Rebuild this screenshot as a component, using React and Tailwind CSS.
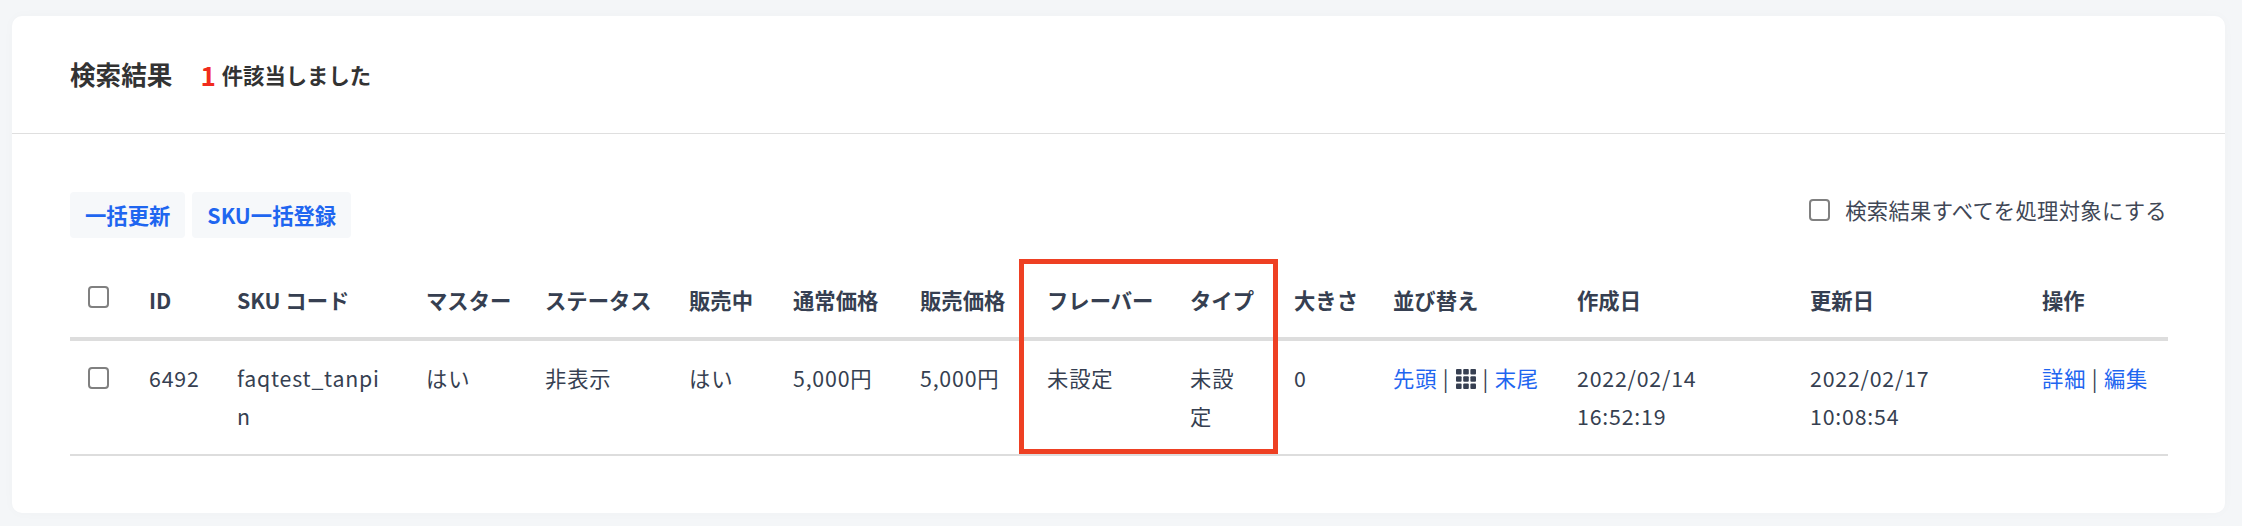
import React from "react";

function Box({ className = "" }) {
  return (
    <input
      type="checkbox"
      className={"block appearance-none w-[21px] h-[22px] border-2 border-[#808080] rounded-[4px] bg-white " + className}
    />
  );
}

function GridIcon() {
  const cells = [];
  for (let r = 0; r < 3; r++) {
    for (let c = 0; c < 3; c++) {
      cells.push(<rect key={r + "-" + c} x={c * 7.2} y={r * 7.2} width="5.6" height="5.6" rx="1" fill="#363f51" />);
    }
  }
  return (
    <svg viewBox="0 0 20 20" className="inline-block w-5 h-5 align-[-2px] mx-[1px]">
      {cells}
    </svg>
  );
}

const heads = [
  ["ID", "w-[88px]"],
  ["SKU コード", "w-[189px]"],
  ["マスター", "w-[119px]"],
  ["ステータス", "w-[144px]"],
  ["販売中", "w-[104px]"],
  ["通常価格", "w-[127px]"],
  ["販売価格", "w-[127px]"],
  ["フレーバー", "w-[143px]"],
  ["タイプ", "w-[104px]"],
  ["大きさ", "w-[99px]"],
  ["並び替え", "w-[184px]"],
  ["作成日", "w-[233px]"],
  ["更新日", "w-[232px]"],
  ["操作", "w-[147px]"],
];

const tdc = "align-top px-[21px] pt-[18px] border-b-2 border-[#dddddd] break-all tracking-[0.8px]";
const tdn = "align-top px-[21px] pt-[18px] border-b-2 border-[#dddddd] whitespace-nowrap tracking-[0.8px]";

export default function App() {
  return (
    <div
      className="min-h-screen bg-[#f4f6f8] pt-4 pb-[13px] pl-3 pr-[17px] text-[#363f51] text-[21.33px]"
      style={{ fontFamily: '"Noto Sans CJK JP", "Noto Sans", sans-serif' }}
    >
      <div className="bg-white rounded-[10px] h-[497px] shadow-[0_0_12px_rgba(0,0,0,0.025)]">
        <div className="h-[118px] border-b border-[#dfdfdf] pl-[58px] flex items-center text-[#333333]">
          <span className="text-[25.6px] font-bold">検索結果</span>
          <span className="ml-[28px] text-[26px] font-bold text-[#f12b1d] leading-none">1</span>
          <span className="ml-[6px] font-bold">件該当しました</span>
        </div>

        <div className="px-[58px] pt-[58px]">
          <div className="flex justify-between h-[71px]">
            <div className="flex gap-[7px] h-[46px]">
              <button className="px-[15px] bg-[#f6f8fa] rounded-[4px] text-[#1f66f0] font-bold">一括更新</button>
              <button className="px-[15px] bg-[#f6f8fa] rounded-[4px] text-[#1f66f0] font-bold">SKU一括登録</button>
            </div>
            <label className="flex items-start h-[30px] text-[#3f4756] tracking-[0.3px]">
              <Box className="mt-[7px]" />
              <span className="ml-[15px] leading-[36px]">検索結果すべてを処理対象にする</span>
            </label>
          </div>

          <div className="relative">
            <table className="table-fixed w-[2098px] border-separate border-spacing-0">
              <thead>
                <tr>
                  <th className="w-[58px] h-[78px] pl-[18px] border-b-4 border-[#dddddd] align-middle">
                    <Box className="-mt-[6px]" />
                  </th>
                  {heads.map(([t, w]) => (
                    <th key={t} className={w + " text-left font-bold px-[21px] border-b-4 border-[#dddddd] align-middle whitespace-nowrap"}>
                      {t}
                    </th>
                  ))}
                </tr>
              </thead>
              <tbody className="leading-[38px]">
                <tr>
                  <td className="h-[115px] align-top pl-[18px] pt-[26px] border-b-2 border-[#dddddd]"><Box /></td>
                  <td className={tdn}>6492</td>
                  <td className={tdc}>faqtest_tanpin</td>
                  <td className={tdc}>はい</td>
                  <td className={tdc}>非表示</td>
                  <td className={tdc}>はい</td>
                  <td className={tdn}>5,000円</td>
                  <td className={tdn}>5,000円</td>
                  <td className={tdc}>未設定</td>
                  <td className={tdc}>未設定</td>
                  <td className={tdc}>0</td>
                  <td className={tdn}>
                    <a className="text-[#1f66f0]">先頭</a> | <GridIcon /> | <a className="text-[#1f66f0]">末尾</a>
                  </td>
                  <td className={tdn}>2022/02/14<br />16:52:19</td>
                  <td className={tdn}>2022/02/17<br />10:08:54</td>
                  <td className={tdn}>
                    <a className="text-[#1f66f0]">詳細</a> | <a className="text-[#1f66f0]">編集</a>
                  </td>
                </tr>
              </tbody>
            </table>
            <div className="absolute left-[949px] -top-1 w-[259px] h-[195px] border-[5px] border-[#ee4023] pointer-events-none" />
          </div>
        </div>
      </div>
    </div>
  );
}
